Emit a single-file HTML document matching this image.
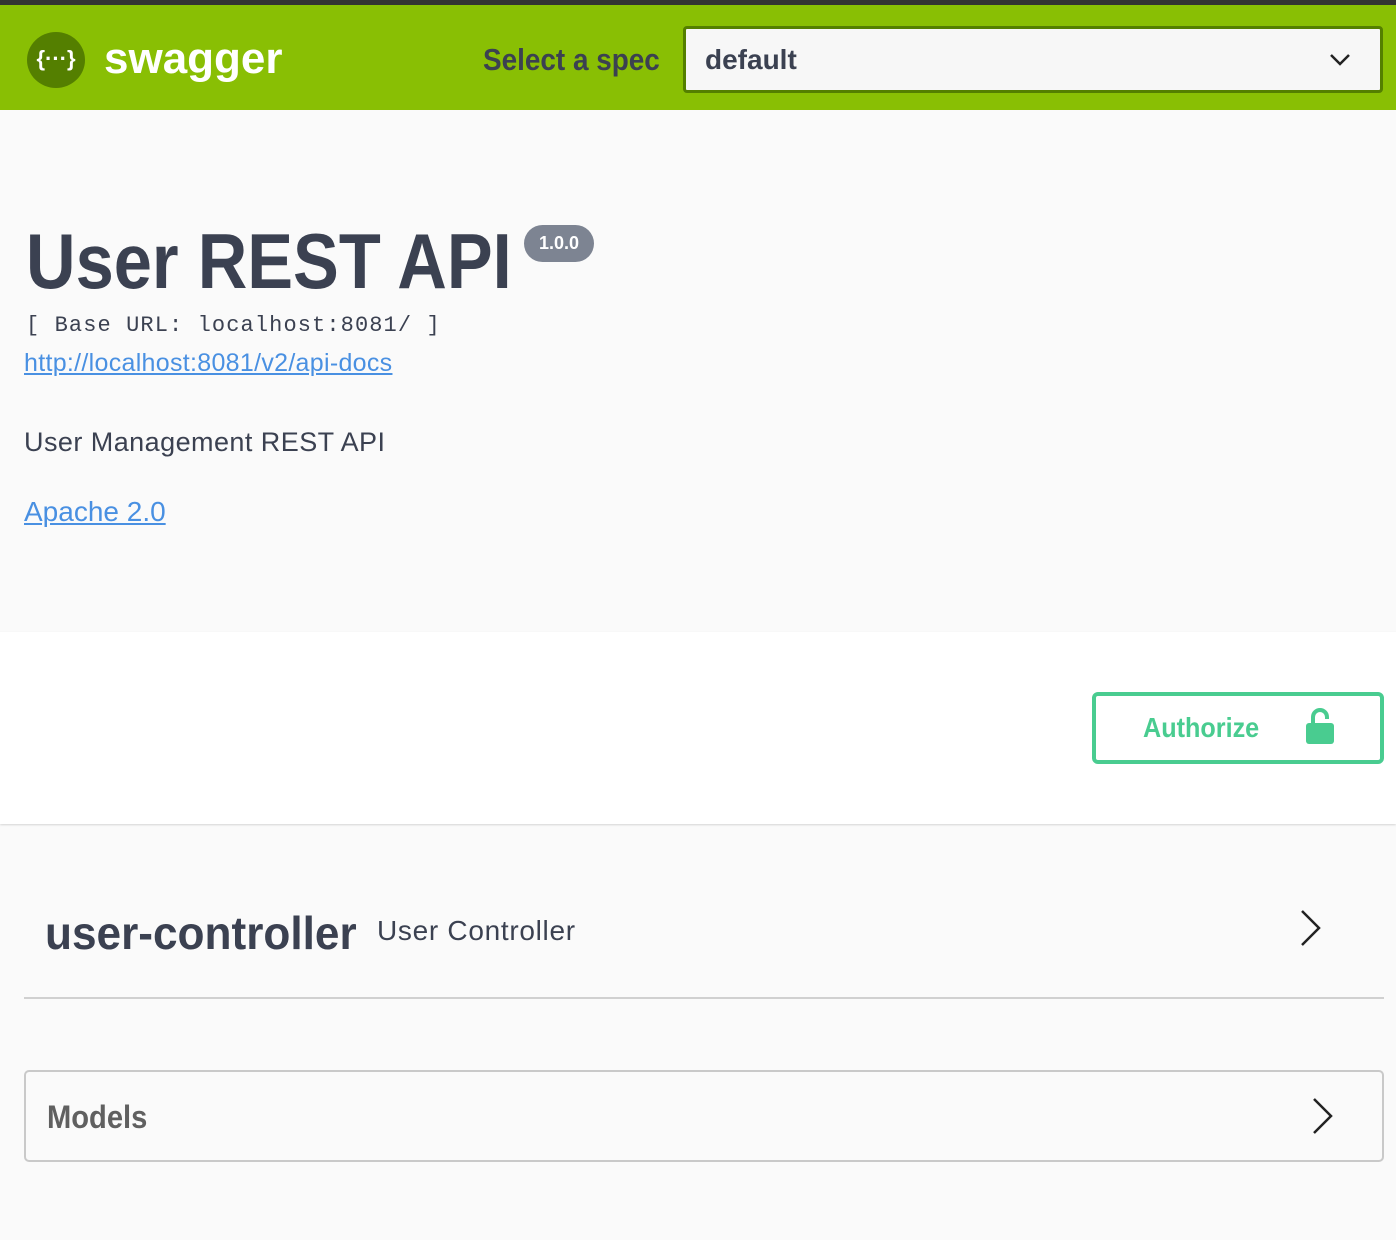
<!DOCTYPE html>
<html><head><style>
*{margin:0;padding:0;box-sizing:border-box}
body{width:1396px;height:1240px;background:#fafafa;font-family:"Liberation Sans",sans-serif;color:#3b4151;position:relative;overflow:hidden}
.abs{position:absolute}
.sx{transform-origin:0 0;white-space:nowrap}
</style></head><body>
<div class="abs" style="left:0;top:0;width:1396px;height:5px;background:#333"></div>
<div class="abs" style="left:0;top:5px;width:1396px;height:105px;background:#89bf04"></div>
<div class="abs" style="left:27px;top:32px;width:58px;height:56px;border-radius:50%;background:#547f00;color:#fff;font-size:22px;font-weight:bold;text-align:center;line-height:54px">{···}</div>
<div class="abs" style="left:104px;top:34px;font-size:44px;font-weight:bold;color:#fff">swagger</div>
<div class="abs sx" style="left:483px;top:42px;font-size:31px;font-weight:bold;color:#3b4151;transform:scaleX(0.9)">Select a spec</div>
<div class="abs" style="left:683px;top:26px;width:700px;height:67px;border:3px solid #547f00;border-radius:4px;background:#f7f7f7"></div>
<div class="abs" style="left:705px;top:44px;font-size:28px;font-weight:bold;color:#3b4151">default</div>
<svg class="abs" style="left:1328px;top:50px" width="24" height="20"><path d="M3 5l9 9 9-9" stroke="#222" stroke-width="2.5" fill="none"/></svg>

<div class="abs sx" style="left:26px;top:216px;font-size:78px;font-weight:bold;color:#3b4151;transform:scaleX(0.88)">User REST API</div>
<div class="abs" style="left:524px;top:225px;width:70px;height:37px;border-radius:19px;background:#7d8492;color:#fff;font-weight:bold;font-size:18px;text-align:center;line-height:37px">1.0.0</div>
<div class="abs" style="left:26px;top:313px;font-family:'Liberation Mono',monospace;font-size:22px;letter-spacing:1.1px;color:#3b4151">[ Base URL: localhost:8081/ ]</div>
<div class="abs" style="left:24px;top:349px;font-size:25px;color:#4990e2;text-decoration:underline;letter-spacing:0.3px">http://localhost:8081/v2/api-docs</div>
<div class="abs" style="left:24px;top:427px;font-size:27px;color:#3b4151;letter-spacing:0.45px">User Management REST API</div>
<div class="abs" style="left:24px;top:496px;font-size:28px;color:#4990e2;text-decoration:underline">Apache 2.0</div>

<div class="abs" style="left:0;top:632px;width:1396px;height:192px;background:#fff;box-shadow:0 1px 2px rgba(0,0,0,.15)"></div>
<div class="abs" style="left:1092px;top:692px;width:292px;height:72px;border:4px solid #49cc90;border-radius:6px;background:#fff"></div>
<div class="abs sx" style="left:1143px;top:712px;font-size:28px;font-weight:bold;color:#49cc90;transform:scaleX(0.9)">Authorize</div>
<svg class="abs" style="left:1304px;top:706px" width="32" height="40"><path d="M9 18V11a7 7 0 0 1 14 0v2" stroke="#49cc90" stroke-width="4" fill="none"/><rect x="2" y="17" width="28" height="21" rx="3" fill="#49cc90"/></svg>

<div class="abs sx" style="left:45px;top:906px;font-size:46px;font-weight:bold;color:#3b4151;transform:scaleX(0.96)">user-controller</div>
<div class="abs" style="left:377px;top:915px;font-size:28px;color:#3b4151;letter-spacing:0.7px">User Controller</div>
<svg class="abs" style="left:1296px;top:908px" width="30" height="40"><path d="M6 3l17 17-17 17" stroke="#222" stroke-width="2.5" fill="none"/></svg>
<div class="abs" style="left:24px;top:997px;width:1360px;height:2px;background:#d0d0d0"></div>

<div class="abs" style="left:24px;top:1070px;width:1360px;height:92px;border:2px solid #c9c9c9;border-radius:5px"></div>
<div class="abs sx" style="left:47px;top:1099px;font-size:32px;font-weight:bold;color:#606060;transform:scaleX(0.91)">Models</div>
<svg class="abs" style="left:1308px;top:1096px" width="30" height="40"><path d="M6 3l17 17-17 17" stroke="#222" stroke-width="2.5" fill="none"/></svg>
</body></html>
